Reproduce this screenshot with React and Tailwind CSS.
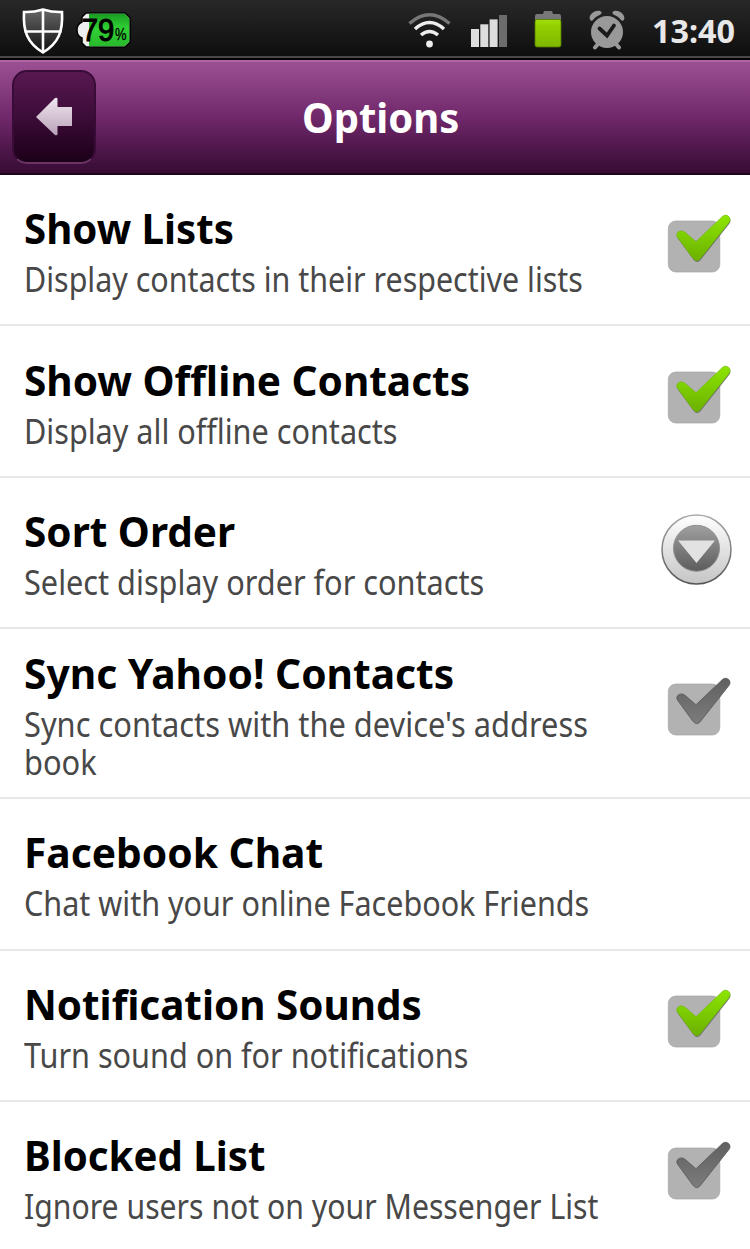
import React from 'react';
import clsx from 'clsx';

const OPTIONS = [
  { title: 'Show Lists', text: 'Display contacts in their respective lists', control: 'on', titleScale: 'scale-x-[0.981]', textScale: 'scale-x-[0.895]' },
  { title: 'Show Offline Contacts', text: 'Display all offline contacts', control: 'on', titleScale: 'scale-x-[0.989]', textScale: 'scale-x-[0.9]' },
  { title: 'Sort Order', text: 'Select display order for contacts', control: 'menu', titleScale: 'scale-x-[0.988]', textScale: 'scale-x-[0.902]' },
  { title: 'Sync Yahoo! Contacts', text: "Sync contacts with the device's address\nbook", control: 'off', height: 'h-[170px]', titleScale: 'scale-x-[0.993]', textScale: 'scale-x-[0.906]' },
  { title: 'Facebook Chat', text: 'Chat with your online Facebook Friends', titleScale: 'scale-x-[0.993]', textScale: 'scale-x-[0.898]' },
  { title: 'Notification Sounds', text: 'Turn sound on for notifications', control: 'on', titleScale: 'scale-x-[0.985]', textScale: 'scale-x-[0.9]' },
  { title: 'Blocked List', text: 'Ignore users not on your Messenger List', control: 'off', titleScale: 'scale-x-[0.98]', textScale: 'scale-x-[0.888]' },
];

const CHECK_PATH = 'M37.4 36.5 C34.8 32 41 28.4 45 31.8 L56 41.2 L82.2 16.2 C86.5 12.2 92.5 17.2 89 22 L61 57.2 C58 61.2 55.5 61.2 52.5 57.2 Z';

function Shield() {
  return (
    <svg className="h-[50px] w-[44px]" viewBox="0 0 44 50">
      <defs>
        <linearGradient id="shield" x1="0" y1="0" x2="0" y2="1">
          <stop offset="0" stopColor="#666" />
          <stop offset="1" stopColor="#111" />
        </linearGradient>
      </defs>
      <path d="M3 7 Q12 7.5 22 4.5 Q32 7.5 41 7 C42 26 38 38 22 47.5 C6 38 2 26 3 7Z" fill="url(#shield)" stroke="#fff" strokeWidth="2.6" />
      <path d="M22 5 V47 M3.5 26.5 H40.5" stroke="#fff" strokeWidth="2.6" />
    </svg>
  );
}

function BatteryPercent() {
  return (
    <svg className="h-[40px] w-[56px]" viewBox="0 0 56 40">
      <defs>
        <linearGradient id="charge" x1="0" y1="0" x2="0" y2="1">
          <stop offset="0" stopColor="#189b21" />
          <stop offset="0.45" stopColor="#30d135" />
          <stop offset="1" stopColor="#28b92c" />
        </linearGradient>
      </defs>
      <path d="M10 3 H49 L54 8 V32 L49 37 H10 L6 33 V28 Q1 26 1 20 Q1 14 6 12 V7Z" fill="#eee" stroke="#000" strokeWidth="1.5" />
      <path d="M13 3.7 H48.7 L53.3 8.3 V31.7 L48.7 36.3 H13Z" fill="url(#charge)" />
      <text x="5.8" y="31" fontSize="31" fontFamily="'Liberation Sans', sans-serif" fill="#000" stroke="#000" strokeWidth="1.1" textLength="32.5" lengthAdjust="spacingAndGlyphs">79</text>
      <text x="39" y="29.5" fontSize="17" fontFamily="'Liberation Sans', sans-serif" fill="#000" stroke="#000" strokeWidth="0.3" textLength="11.5" lengthAdjust="spacingAndGlyphs">%</text>
    </svg>
  );
}

function Wifi() {
  return (
    <svg className="h-[40px] w-[46px]" viewBox="0 0 46 40" fill="none" strokeWidth="3.5">
      <path d="M2.5 13.5 Q22.5 -4 42.5 13.5" stroke="#777" />
      <path d="M8 19 Q22.5 6 37 19" stroke="#eee" />
      <path d="M14 25 Q22.5 18 31 25" stroke="#eee" />
      <circle cx="22.5" cy="34" r="3.4" fill="#eee" />
    </svg>
  );
}

function Signal() {
  return (
    <svg className="h-[36px] w-[38px]" viewBox="0 0 38 36">
      <rect x="1" y="17" width="8" height="18" fill="#ddd" />
      <rect x="10.3" y="12.3" width="8" height="22.7" fill="#ddd" />
      <rect x="19.6" y="7.4" width="8" height="27.6" fill="#ddd" />
      <rect x="29" y="3" width="8" height="32" fill="#6c6c6c" />
    </svg>
  );
}

function Battery() {
  return (
    <svg className="h-[40px] w-[30px]" viewBox="0 0 30 40">
      <defs>
        <linearGradient id="battery" x1="0" y1="0" x2="0" y2="1">
          <stop offset="0" stopColor="#a0e00a" />
          <stop offset="0.25" stopColor="#93cf00" />
          <stop offset="1" stopColor="#7db600" />
        </linearGradient>
      </defs>
      <path d="M2 10 V6 Q2 4 4 4 H10 L11 1 H19 L20 4 H26 Q28 4 28 6 V10Z" fill="#777" />
      <rect x="2" y="9.5" width="26" height="27.5" rx="2" fill="url(#battery)" stroke="#527a00" strokeWidth="0.8" />
    </svg>
  );
}

function Alarm() {
  return (
    <svg className="h-[40px] w-[36px]" viewBox="0 0 36 40">
      <circle cx="18" cy="22" r="16" fill="#999" />
      <path d="M9 34 L6 37.5 M27 34 L30 37.5" stroke="#999" strokeWidth="4" strokeLinecap="round" />
      <path d="M1 9.5 C-1 6 5 -1 11.5 1.2 C14 2.5 12 4.5 9.5 5.5 C6 7 5 9 3.5 10.5 Q2 11.5 1 9.5Z M35 9.5 C37 6 31 -1 24.5 1.2 C22 2.5 24 4.5 26.5 5.5 C30 7 31 9 32.5 10.5 Q34 11.5 35 9.5Z" fill="#999" />
      <path d="M10.5 18.5 L18 25.5 L25 15.5" fill="none" stroke="#1a1a1a" strokeWidth="3.8" strokeLinecap="round" />
    </svg>
  );
}

function StatusBar() {
  return (
    <div className="flex h-[60px] shrink-0 flex-col bg-linear-to-b from-[#282828] to-[#0d0d0d] text-[#e8e8e8]">
      <div className="flex h-[56px] items-center pt-1">
        <div className="ml-[21px]"><Shield /></div>
        <div className="ml-[11px]"><BatteryPercent /></div>
        <div className="ml-[275px]"><Wifi /></div>
        <div className="ml-[17px]"><Signal /></div>
        <div className="ml-[25px]"><Battery /></div>
        <div className="ml-[26px]"><Alarm /></div>
        <span className="ml-[27px] origin-left scale-x-[0.98] text-[33px] leading-none font-bold whitespace-nowrap">13:40</span>
      </div>
      <div className="h-[2px] bg-[#484848]" />
      <div className="h-[2px] bg-black" />
    </div>
  );
}

function TitleBar() {
  return (
    <header className="flex h-[115px] shrink-0 items-center border-t-2 border-b-2 border-t-[#b067a8] border-b-[#1c051b] bg-linear-to-b from-[#9c5094] via-[#70286b] to-[#370b34]">
      <button className="mb-[2px] ml-[12px] flex h-[94px] w-[84px] items-center justify-center rounded-[15px] border-2 border-[#390b37] border-b-[#6a3566] bg-linear-to-b from-[#581851] via-[#3c0c38] to-[#1c0119]">
        <svg className="h-[40px] w-[38px]" viewBox="0 0 38 40">
          <defs>
            <linearGradient id="arrow" x1="0" y1="0" x2="0" y2="1">
              <stop offset="0" stopColor="#f0e8f0" />
              <stop offset="1" stopColor="#b9a0b8" />
            </linearGradient>
          </defs>
          <path d="M1 20 L20 1 Q22.5 0 22.5 2 V10 H37 V29 H22.5 V37 Q22.5 39 20 38Z" fill="url(#arrow)" />
        </svg>
      </button>
      <h1 className="ml-[206px] origin-left scale-x-[0.976] text-[41px] leading-none font-bold whitespace-nowrap text-white">Options</h1>
    </header>
  );
}

function Checkbox({ checked }) {
  return (
    <svg className="mt-[2px] h-[76px] w-[80px] overflow-visible" viewBox="20 12.5 80 76">
      <defs>
        <linearGradient id="checkOn" x1="0" y1="0" x2="0" y2="1">
          <stop offset="0" stopColor="#8de600" />
          <stop offset="1" stopColor="#6bb000" />
        </linearGradient>
        <linearGradient id="checkOff" x1="0" y1="0" x2="0" y2="1">
          <stop offset="0" stopColor="#606060" />
          <stop offset="1" stopColor="#7c7c7c" />
        </linearGradient>
      </defs>
      <rect x="28.3" y="20.5" width="51.5" height="51" rx="7.5" fill="#b2b2b2" stroke="#a5a5a5" strokeWidth="0.7" />
      {checked && <path d={CHECK_PATH} transform="translate(0.4 1.3)" fill="#555" opacity="0.75" />}
      <path d={CHECK_PATH} fill={checked ? 'url(#checkOn)' : 'url(#checkOff)'} stroke={checked ? '#70b900' : '#505050'} strokeWidth="0.7" />
    </svg>
  );
}

function MenuButton() {
  return (
    <svg className="h-[76px] w-[80px]" viewBox="0 0 80 76">
      <defs>
        <linearGradient id="ring" x1="0" y1="0" x2="0" y2="1">
          <stop offset="0" stopColor="#fff" />
          <stop offset="1" stopColor="#c5c5c5" />
        </linearGradient>
        <linearGradient id="ringEdge" x1="0" y1="0" x2="0" y2="1">
          <stop offset="0" stopColor="#aaa" />
          <stop offset="1" stopColor="#555" />
        </linearGradient>
        <linearGradient id="disc" x1="0" y1="0" x2="0" y2="1">
          <stop offset="0" stopColor="#a0a0a0" />
          <stop offset="1" stopColor="#5c5c5c" />
        </linearGradient>
      </defs>
      <circle cx="36.5" cy="35.5" r="34.5" fill="url(#ring)" stroke="url(#ringEdge)" strokeWidth="1.5" />
      <circle cx="36.5" cy="34.3" r="23" fill="url(#disc)" stroke="#909090" />
      <path d="M18 26.5 H55 L36.5 49Z" fill="#e2e2e2" />
    </svg>
  );
}

function OptionRow({ title, text, control, titleScale, textScale, height = 'h-[151.4px]' }) {
  return (
    <li className={clsx('flex shrink-0 items-center border-b-2 border-[#e8e8e8] pr-[10px] pl-6', height)}>
      <div className="min-w-0 flex-1 pt-[2px]">
        <h2 className={clsx('mb-[6px] w-max origin-left text-[41px] leading-[51px] font-bold text-black', titleScale)}>{title}</h2>
        <p className={clsx('w-max origin-left text-[34px] leading-[38px] whitespace-pre text-[#484848]', textScale)}>{text}</p>
      </div>
      {control === 'menu' && <MenuButton />}
      {(control === 'on' || control === 'off') && <Checkbox checked={control === 'on'} />}
    </li>
  );
}

export default function App() {
  return (
    <div className="flex h-[1249px] w-[750px] flex-col overflow-hidden bg-white font-['Noto_Sans','Open_Sans',sans-serif]">
      <StatusBar />
      <TitleBar />
      <ul className="flex flex-col">
        {OPTIONS.map((option) => (
          <OptionRow key={option.title} {...option} />
        ))}
      </ul>
    </div>
  );
}
